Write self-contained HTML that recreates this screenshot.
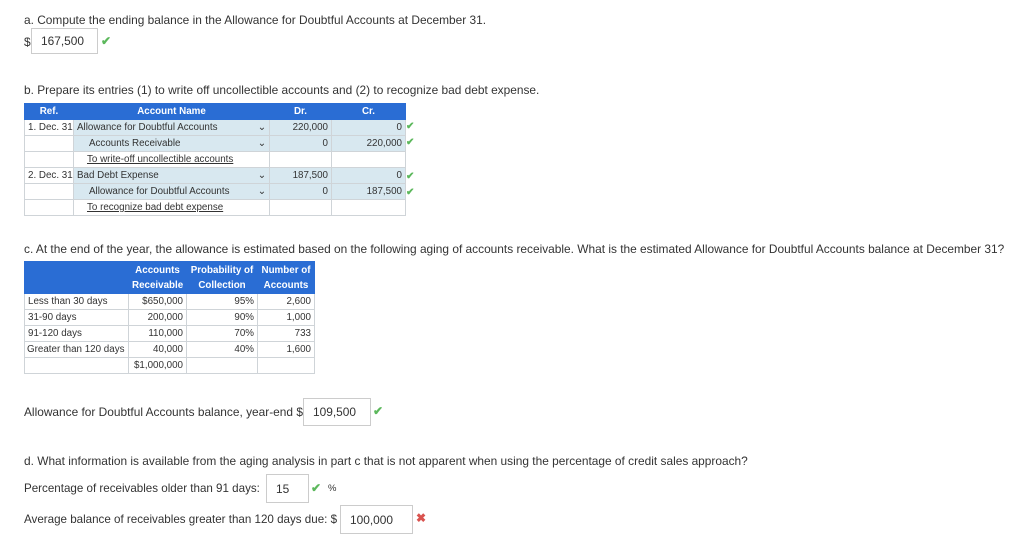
<!DOCTYPE html>
<html><head><meta charset="utf-8"><style>
body{margin:0;width:1024px;height:539px;background:#fff;font-family:"Liberation Sans",sans-serif;color:#333;position:relative;overflow:hidden}
.a{position:absolute;white-space:nowrap}
.t{font-size:11.9px}
.inp{position:absolute;border:1px solid #ccc;background:#fff;font-size:11.9px;box-sizing:border-box;padding-left:9px;display:flex;align-items:center}
.ck{position:absolute;color:#5cb85c;font-size:12px;font-weight:bold}
table{position:absolute;border-collapse:collapse;font-size:9.8px;table-layout:fixed}
td,th{padding:0 3px;border:1px solid #cfd4d8;height:16px;box-sizing:border-box;white-space:nowrap;overflow:hidden}
th{background:#2a6dd4;color:#fff;border-color:#2a6dd4;font-weight:bold}
.b{background:#d8e8f0}
.r{text-align:right}
.u{text-decoration:underline}
</style></head><body>
<div class="a t" style="left:24px;top:13px">a. Compute the ending balance in the Allowance for Doubtful Accounts at December 31.</div>
<div class="a t" style="left:24px;top:35px">$</div>
<div class="inp" style="left:31px;top:28px;width:67px;height:26px">167,500</div>
<div class="ck" style="left:101px;top:34px">✔</div>

<div class="a t" style="left:24px;top:83px">b. Prepare its entries (1) to write off uncollectible accounts and (2) to recognize bad debt expense.</div>
<table style="left:24px;top:103px;width:381px">
<colgroup><col style="width:49px"><col style="width:196px"><col style="width:62px"><col style="width:74px"></colgroup>
<tr style="height:16px"><th>Ref.</th><th>Account Name</th><th>Dr.</th><th>Cr.</th></tr>
<tr><td>1. Dec. 31</td><td class="b">Allowance for Doubtful Accounts<span style="float:right">⌄</span></td><td class="b r">220,000</td><td class="b r">0</td></tr>
<tr><td></td><td class="b" style="padding-left:15px">Accounts Receivable<span style="float:right">⌄</span></td><td class="b r">0</td><td class="b r">220,000</td></tr>
<tr><td></td><td style="padding-left:13px"><span class="u">To write-off uncollectible accounts</span></td><td></td><td></td></tr>
<tr><td>2. Dec. 31</td><td class="b">Bad Debt Expense<span style="float:right">⌄</span></td><td class="b r">187,500</td><td class="b r">0</td></tr>
<tr><td></td><td class="b" style="padding-left:15px">Allowance for Doubtful Accounts<span style="float:right">⌄</span></td><td class="b r">0</td><td class="b r">187,500</td></tr>
<tr><td></td><td style="padding-left:13px"><span class="u">To recognize bad debt expense</span></td><td></td><td></td></tr>
</table>
<div class="ck" style="left:406px;top:121px;font-size:10px">✔</div>
<div class="ck" style="left:406px;top:137px;font-size:10px">✔</div>
<div class="ck" style="left:406px;top:171px;font-size:10px">✔</div>
<div class="ck" style="left:406px;top:187px;font-size:10px">✔</div>

<div class="a t" style="left:24px;top:242px">c. At the end of the year, the allowance is estimated based on the following aging of accounts receivable. What is the estimated Allowance for Doubtful Accounts balance at December 31?</div>
<table style="left:24px;top:261px;width:290px">
<colgroup><col style="width:104px"><col style="width:58px"><col style="width:71px"><col style="width:57px"></colgroup>
<tr><th style="height:32px"></th><th style="line-height:15px">Accounts<br>Receivable</th><th style="line-height:15px;padding:0">Probability of<br>Collection</th><th style="line-height:15px;padding:0">Number of<br>Accounts</th></tr>
<tr><td>Less than 30 days</td><td class="r">$650,000</td><td class="r">95%</td><td class="r">2,600</td></tr>
<tr><td>31-90 days</td><td class="r">200,000</td><td class="r">90%</td><td class="r">1,000</td></tr>
<tr><td>91-120 days</td><td class="r">110,000</td><td class="r">70%</td><td class="r">733</td></tr>
<tr><td style="padding:0 2px">Greater than 120 days</td><td class="r">40,000</td><td class="r">40%</td><td class="r">1,600</td></tr>
<tr><td></td><td class="r" style="border-top:1px solid #333">$1,000,000</td><td></td><td></td></tr>
</table>

<div class="a t" style="left:24px;top:405px">Allowance for Doubtful Accounts balance, year-end $</div>
<div class="inp" style="left:303px;top:398px;width:68px;height:28px">109,500</div>
<div class="ck" style="left:373px;top:404px">✔</div>

<div class="a t" style="left:24px;top:454px">d. What information is available from the aging analysis in part c that is not apparent when using the percentage of credit sales approach?</div>
<div class="a t" style="left:24px;top:482px;font-size:11.6px">Percentage of receivables older than 91 days:</div>
<div class="inp" style="left:266px;top:474px;width:43px;height:29px">15</div>
<div class="ck" style="left:311px;top:481px">✔</div>
<div class="a" style="left:328px;top:483px;font-size:9.5px">%</div>
<div class="a t" style="left:24px;top:513px;font-size:11.6px">Average balance of receivables greater than 120 days due: $</div>
<div class="inp" style="left:340px;top:505px;width:73px;height:29px">100,000</div>
<div class="a" style="left:416px;top:511px;color:#d9534f;font-size:12px;font-weight:bold">✖</div>
</body></html>
